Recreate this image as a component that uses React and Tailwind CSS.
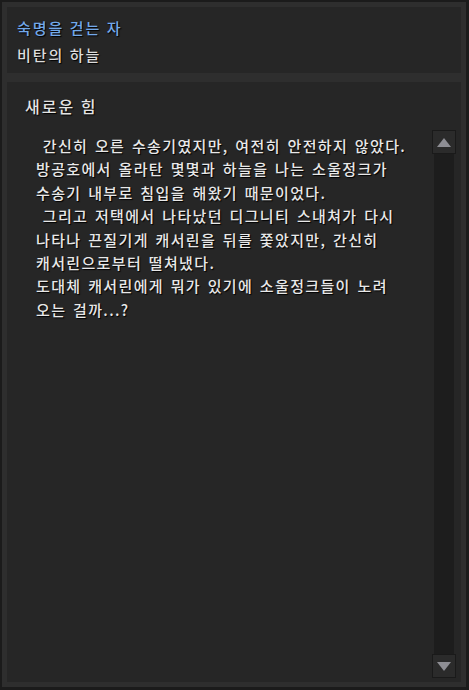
const lines = [
  " 간신히 오른 수송기였지만, 여전히 안전하지 않았다.",
  "방공호에서 올라탄 몇몇과 하늘을 나는 소울정크가",
  "수송기 내부로 침입을 해왔기 때문이었다.",
  " 그리고 저택에서 나타났던 디그니티 스내쳐가 다시",
  "나타나 끈질기게 캐서린을 뒤를 쫓았지만, 간신히",
  "캐서린으로부터 떨쳐냈다.",
  "도대체 캐서린에게 뭐가 있기에 소울정크들이 노려",
  "오는 걸까...?",
];

const font = { fontFamily: '"Noto Sans CJK KR", "Noto Sans", sans-serif' };

const ScrollButton = ({ down = false }) => (
  <div className="w-6 h-6 shrink-0 bg-[#2b2b2b] border border-[#1a1a1a] flex items-center justify-center">
    <svg width="14" height="9" viewBox="0 0 14 9">
      {down ? (
        <polygon points="0,0 14,0 7,9" fill="#8e8e94" />
      ) : (
        <polygon points="7,0 14,9 0,9" fill="#8e8e94" />
      )}
    </svg>
  </div>
);

export default function App() {
  return (
    <div
      style={font}
      className="w-[469px] h-[690px] bg-[#2e2e2e] border-t-2 border-l-2 border-r-[3px] border-b-[3px] border-[#1b1b1b] p-[5px] flex flex-col gap-[9px] [text-shadow:1px_1px_1px_#000]"
    >
      {/* quest header */}
      <div className="h-[66px] shrink-0 bg-[#262626] pl-[10px] pt-[9px] flex flex-col">
        <div className="text-[15px] leading-[24px] tracking-[2px] font-medium text-[#73a9ea]">숙명을 걷는 자</div>
        <div className="text-[15px] leading-[24px] tracking-[2px] font-medium text-[#dcdcdc] mt-[3px]">비탄의 하늘</div>
      </div>

      {/* description */}
      <div className="flex-1 bg-[#262626] flex flex-col pt-[12px] pb-[4px]">
        <div className="pl-[18px] text-[16px] leading-[24px] tracking-[2px] font-medium text-[#e4e4e4]">새로운 힘</div>
        <div className="flex-1 flex mt-[12px] pr-[5px]">
          <div className="flex-1 pl-[29px] pt-[4px] text-[15px] leading-[23.4px] tracking-[1.35px] [word-spacing:2px] font-medium text-[#e8e8e8]">
            {lines.map((l, i) => (
              <div key={i} className="whitespace-pre">{l}</div>
            ))}
          </div>
          <div className="w-6 flex flex-col items-center">
            <ScrollButton />
            <div className="flex-1 w-5 bg-[#1d1d1d]" />
            <ScrollButton down />
          </div>
        </div>
      </div>
    </div>
  );
}
